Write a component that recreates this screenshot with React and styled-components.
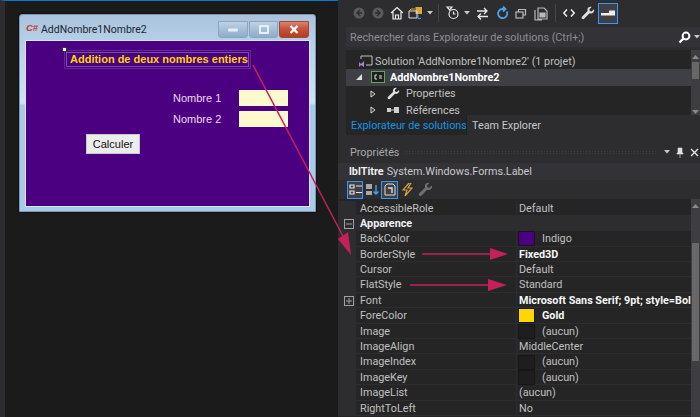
import React from "react"
import styled, { createGlobalStyle } from "styled-components"

const Global = createGlobalStyle`
	html, body {
		margin: 0;
		padding: 0;
		background: #1b1b1b;
	}
	#root {
		width: 700px;
		height: 417px;
	}
`

const Screen = styled.div`
	position: relative;
	display: grid;
	grid-template-columns: 338px 362px;
	width: 700px;
	height: 417px;
	overflow: hidden;
	font-family: Roboto, "Open Sans", sans-serif;
	font-size: 10.8px;
	color: #c8c8c8;
`

/* designer side */
const Designer = styled.div`
	box-sizing: border-box;
	height: 417px;
	padding: 13px 0 0 14px;
	background: #1b1b1b;
	border-top: 1px solid #007acc;
	border-left: 5px solid #2d2d30;
`

const FormWindow = styled.div`
	box-sizing: border-box;
	width: 297px;
	height: 198px;
	padding: 0 5px 5px;
	border-radius: 3px 3px 0 0;
	border: 1px solid #7c98b5;
	box-shadow: 0 0 2px #000;
	background: linear-gradient(180deg, #a9c3dd 0, #b5cfe8 25px, #cfe3f5 45%, #a8c9e8 46%, #a9cbea 100%);
`

const Caption = styled.div`
	display: flex;
	align-items: flex-start;
	height: 25px;
	box-sizing: border-box;
`

const CsharpIcon = styled.span`
	width: 13px;
	margin: 8px 2px 0 1px;
	font: italic 700 9.5px/10px "Liberation Sans", sans-serif;
	color: #c0392b;
`

const CaptionTitle = styled.span`
	flex: 1;
	margin-top: 8px;
	font: 10.5px Roboto, sans-serif;
	color: #1c2530;
`

const CaptionButtons = styled.div`
	display: flex;
	gap: 1px;
	margin: 6px 1px 0 0;
`

const CaptionButton = styled.div`
	display: flex;
	align-items: center;
	justify-content: center;
	width: ${p => p.$w}px;
	height: 17px;
	box-sizing: border-box;
	border: 1px solid ${p => (p.$close ? "#a8452f" : "#8aa5c0")};
	border-radius: 0 0 3px 3px;
	background: ${p =>
		p.$close
			? "linear-gradient(180deg, #d68572 0, #c5543c 45%, #b23d22 100%)"
			: "linear-gradient(180deg, #bdd2e6 0, #a8c1da 45%, #8fabc8 100%)"};
`

const FormBody = styled.div`
	box-sizing: border-box;
	height: 167px;
	padding: 9px 15px 0 38px;
	background: #4b0082;
	border: 1px solid #d6e6f5;
`

const TitleFrame = styled.div`
	position: relative;
	box-sizing: border-box;
	width: 187px;
	height: 19px;
	padding: 1px;
	border: 1px solid #5d2a90;
`

const Handle = styled.span`
	position: absolute;
	left: -3px;
	top: -4px;
	width: 3px;
	height: 3px;
	background: #fff;
	border: 1px solid #333;
`

const TitleLabel = styled.div`
	box-sizing: border-box;
	height: 15px;
	padding-left: 3px;
	border: 1px solid #7a4aa8;
	font: 700 11px/13px "Liberation Sans", sans-serif;
	color: #ffd700;
	white-space: nowrap;
`

const FieldRow = styled.div`
	display: flex;
	align-items: center;
	height: 16px;
	margin-top: ${p => p.$top}px;
	padding-left: 109px;
`

const FieldLabel = styled.span`
	width: 66px;
	font: 11px "Liberation Sans", sans-serif;
	color: #f0d8f0;
`

const FieldInput = styled.div`
	width: 49px;
	height: 16px;
	background: #fffacd;
`

const CalcButton = styled.div`
	display: flex;
	align-items: center;
	justify-content: center;
	width: 54px;
	height: 20px;
	margin: 7px 0 0 22px;
	box-sizing: border-box;
	background: #ececec;
	border: 1px solid #c8c8c8;
	font: 11px "Liberation Sans", sans-serif;
	color: #111;
`

/* right side */
const Tools = styled.div`
	display: flex;
	flex-direction: column;
	height: 417px;
	background: #2d2d30;
`

const Toolbar = styled.div`
	display: flex;
	align-items: center;
	gap: ${p => p.$gap || 0}px;
	height: 26px;
	padding-left: ${p => p.$pad || 0}px;
	box-sizing: border-box;
`

const ToolSlot = styled.div`
	display: flex;
	align-items: center;
	justify-content: center;
	width: ${p => p.$w || 19}px;
	height: ${p => p.$h || 18}px;
	box-sizing: border-box;
	border: 1px solid ${p => (p.$on ? "#3399ff" : "transparent")};
	background: ${p => (p.$on ? "#3f3f46" : "transparent")};
`

const ToolSep = styled.div`
	width: 1px;
	height: 18px;
	margin: 0 4px;
	background: #46464a;
`

const SearchBar = styled.div`
	display: flex;
	align-items: center;
	justify-content: space-between;
	height: 20px;
	margin: 1px 0 3px 8px;
	padding: 0 0 0 4px;
	background: #333337;
	color: #8e8e92;
`

const SearchTools = styled.div`
	display: flex;
	align-items: center;
	gap: 3px;
	padding-right: 0;
`

const TreePanel = styled.div`
	display: flex;
	height: 65px;
	margin-left: 8px;
	background: #252526;
`

const TreeRows = styled.div`
	flex: 1;
	padding-top: 3px;
`

const TreeRow = styled.div`
	display: flex;
	align-items: center;
	height: 16.3px;
	padding-left: ${p => p.$indent}px;
	background: ${p => (p.$sel ? "#3f3f46" : "transparent")};
	color: ${p => (p.$sel ? "#fff" : "#c0c0c0")};
	font-weight: ${p => (p.$sel ? 700 : 400)};
	white-space: nowrap;
`

const TreeIcon = styled.span`
	display: flex;
	align-items: center;
	justify-content: center;
	width: ${p => p.$w}px;
	flex: none;
`

const VScroll = styled.div`
	display: flex;
	flex-direction: column;
	align-items: center;
	width: 9px;
	padding-top: 4px;
	background: #3e3e42;
`

const Thumb = styled.div`
	width: 7px;
	height: ${p => p.$h}px;
	margin-top: ${p => p.$m}px;
	background: #686868;
`

const ScrollFill = styled.div`
	flex: 1;
`

const TabStrip = styled.div`
	display: flex;
	height: 20px;
	margin-left: 8px;
`

const Tab = styled.div`
	display: flex;
	align-items: center;
	height: 100%;
	box-sizing: border-box;
	padding: 1px 5px 0;
	width: ${p => p.$w}px;
	flex: ${p => (p.$grow ? 1 : "none")};
	color: ${p => (p.$active ? "#0e97e8" : "#c8c8c8")};
	background: ${p => (p.$active ? "#252526" : "#2d2d30")};
	border-left: ${p => (p.$active ? "none" : "1px solid #1e1e1e")};
	white-space: nowrap;
`

const Gutter = styled.div`
	height: 6px;
	background: #2d2d30;
`

const PropsHeader = styled.div`
	display: flex;
	align-items: center;
	gap: 6px;
	height: 22px;
	padding-left: 12px;
	background: #2d2d30;
	color: #a8a8a8;
`

const Dots = styled.div`
	flex: 1;
	height: 5px;
	background-image: radial-gradient(#46464a 0.6px, transparent 0.7px);
	background-size: 3px 2.5px;
`

const PinBox = styled.div`
	display: flex;
	align-items: center;
	gap: 6px;
	padding-right: 1px;
`

const ObjectRow = styled.div`
	display: flex;
	align-items: center;
	height: 17px;
	padding-left: 11px;
	background: #333337;
	white-space: nowrap;
	b {
		margin-right: 3px;
		color: #eee;
	}
`

const PropsTools = styled(Toolbar)`
	height: 19px;
	padding-left: 9px;
	gap: 1px;
`

const PropsGrid = styled.div`
	display: flex;
	flex: 1;
	background: #252526;
	overflow: hidden;
`

const PropsRows = styled.div`
	flex: 1;
	padding-top: 1.5px;
`

const PropRowBox = styled.div`
	display: grid;
	grid-template-columns: 18px 160px 1fr;
	height: 15.4px;
	line-height: 15.4px;
	box-sizing: border-box;
	border-bottom: 1px solid #2d2d30;
	white-space: nowrap;
`

const GutterCell = styled.div`
	display: flex;
	align-items: center;
	justify-content: center;
	padding-left: 4px;
	background: #2d2d30;
`

const NameCell = styled.div`
	padding-left: 4px;
	color: ${p => (p.$head ? "#f0f0f0" : "#c0c0c0")};
	font-weight: ${p => (p.$head ? 700 : 400)};
	background: ${p => (p.$head ? "#2d2d30" : "transparent")};
`

const ValueCell = styled.div`
	display: flex;
	align-items: center;
	gap: 7px;
	padding-left: 2px;
	border-left: 1px solid #2d2d30;
	color: ${p => (p.$bold ? "#f5f5f5" : "#c0c0c0")};
	font-weight: ${p => (p.$bold ? 700 : 400)};
	background: ${p => (p.$head ? "#2d2d30" : "transparent")};
`

const Swatch = styled.span`
	flex: none;
	width: 17px;
	height: 15px;
	margin-left: -1px;
	box-sizing: border-box;
	border: 1px solid #161616;
	background: ${p => p.$c};
`

const ArrowLayer = styled.svg`
	position: absolute;
	left: 0;
	top: 0;
	pointer-events: none;
`

const Glyph = ({ w = 14, h = 14, children, stroke = "#e8e8e8", sw = 1.3, fill = "none" }) => (
	<svg width={w} height={h} viewBox={`0 0 ${w} ${h}`} fill={fill} stroke={stroke} strokeWidth={sw}>
		{children}
	</svg>
)

const Wrench = ({ c = "#e0e0e0", size = 14 }) => (
	<svg width={size} height={size} viewBox="0 0 14 14">
		<path d="M13 3.2 10.6 5.4 8.8 4.9 8.4 3.2 10.6 1C8.6.3 6.4 1.6 6.4 3.8c0 .5.1 1 .2 1.3L1.2 10.4c-.7.8-.7 1.6-.1 2.3.6.6 1.500.6 2.2-.1l5.3-5.3c2.7.8 5.2-1.6 4.4-4.1Z" fill={c} />
	</svg>
)

const Drop = () => (
	<svg width="6" height="4" viewBox="0 0 6 4">
		<path d="M0 0h6L3 3.5Z" fill="#c8c8c8" />
	</svg>
)

const Back = ({ flip }) => (
	<svg width="12" height="12" viewBox="0 0 12 12">
		<circle cx="6" cy="6" r="5.5" fill="#5a5a5e" />
		<path d={flip ? "M5 3 8 6 5 9M8 6H3" : "M7 3 4 6 7 9M4 6h5"} stroke="#2d2d30" strokeWidth="1.4" fill="none" />
	</svg>
)

const Search = () => (
	<svg width="13" height="13" viewBox="0 0 13 13">
		<circle cx="8" cy="5" r="3.4" fill="none" stroke="#fff" strokeWidth="2" />
		<path d="M5.600 7.400 1.500 11.500" stroke="#fff" strokeWidth="2.2" />
	</svg>
)

const Expander = ({ open }) => (
	<svg width="8" height="8" viewBox="0 0 8 8">
		{open ? <path d="M7 1v6H1Z" fill="#e0e0e0" /> : <path d="M2 1l4 3-4 3Z" fill="none" stroke="#e0e0e0" />}
	</svg>
)

const PlusBox = ({ minus }) => (
	<svg width="10" height="10" viewBox="0 0 10 10">
		<rect x=".5" y=".5" width="9" height="9" fill="none" stroke="#a0a0a0" />
		<path d={minus ? "M2 5h6" : "M2 5h6M5 2v6"} stroke="#a0a0a0" />
	</svg>
)

const ScrollArrow = ({ down }) => (
	<svg width="9" height="6" viewBox="0 0 9 6">
		<path d={down ? "M1 1h7L4.500 5Z" : "M1 5h7L4.500 1Z"} fill="#8a8a8a" />
	</svg>
)

const props = [
	{ name: "AccessibleRole", value: "Default" },
	{ name: "Apparence", head: true },
	{ name: "BackColor", value: "Indigo", swatch: "#4b0082" },
	{ name: "BorderStyle", value: "Fixed3D", bold: true },
	{ name: "Cursor", value: "Default" },
	{ name: "FlatStyle", value: "Standard" },
	{ name: "Font", value: "Microsoft Sans Serif; 9pt; style=Bol", bold: true, plus: true },
	{ name: "ForeColor", value: "Gold", swatch: "#ffd700", bold: true },
	{ name: "Image", value: "(aucun)", swatch: "#1e1e1e" },
	{ name: "ImageAlign", value: "MiddleCenter" },
	{ name: "ImageIndex", value: "(aucun)", swatch: "#1e1e1e" },
	{ name: "ImageKey", value: "(aucun)", swatch: "#1e1e1e" },
	{ name: "ImageList", value: "(aucun)" },
	{ name: "RightToLeft", value: "No" },
]

const PropRow = ({ row }) => (
	<PropRowBox>
		<GutterCell>
			{row.head && <PlusBox minus />}
			{row.plus && <PlusBox />}
		</GutterCell>
		<NameCell $head={row.head}>{row.name}</NameCell>
		<ValueCell $bold={row.bold} $head={row.head}>
			{row.swatch && <Swatch $c={row.swatch} />}
			{row.value}
		</ValueCell>
	</PropRowBox>
)

export default function App() {
	return (
		<Screen>
			<Global />
			<Designer>
				<FormWindow>
					<Caption>
						<CsharpIcon>C#</CsharpIcon>
						<CaptionTitle>AddNombre1Nombre2</CaptionTitle>
						<CaptionButtons>
							<CaptionButton $w={30}>
								<svg width="10" height="4"><rect width="10" height="3" y=".5" rx="1" fill="#e8eef5" /></svg>
							</CaptionButton>
							<CaptionButton $w={29}>
								<svg width="10" height="9"><rect x="1" y="1" width="8" height="7" fill="none" stroke="#e8eef5" strokeWidth="2" /></svg>
							</CaptionButton>
							<CaptionButton $w={30} $close>
								<svg width="10" height="9"><path d="M1.500 1 8.500 8M8.500 1 1.500 8" stroke="#fff" strokeWidth="2.4" /></svg>
							</CaptionButton>
						</CaptionButtons>
					</Caption>
					<FormBody>
						<TitleFrame>
							<Handle />
							<TitleLabel>Addition de deux nombres entiers</TitleLabel>
						</TitleFrame>
						<FieldRow $top={21}>
							<FieldLabel>Nombre 1</FieldLabel>
							<FieldInput />
						</FieldRow>
						<FieldRow $top={5}>
							<FieldLabel>Nombre 2</FieldLabel>
							<FieldInput />
						</FieldRow>
						<CalcButton>Calculer</CalcButton>
					</FormBody>
				</FormWindow>
			</Designer>

			<Tools>
				<Toolbar $pad={11}>
					<ToolSlot><Back /></ToolSlot>
					<ToolSlot><Back flip /></ToolSlot>
					<ToolSlot>
						<Glyph w={14} h={14} sw={1.2} stroke="#f0f0f0">
							<path d="M1 7 7 1.500 13 7M3 6v7h8V6M5.500 13V9h3v4" />
						</Glyph>
					</ToolSlot>
					<ToolSlot>
						<svg width="15" height="14" viewBox="0 0 15 14">
							<rect x="7.500" y="1" width="6.500" height="7" fill="#d9a441" />
							<path d="M1 5h8v7H1Z" fill="none" stroke="#e0e0e0" />
							<path d="M1 5 3 3h4" fill="none" stroke="#d9a441" />
							<path d="M10 9v3.500h3" fill="none" stroke="#4aa3e8" />
						</svg>
					</ToolSlot>
					<ToolSlot $w={9}><Drop /></ToolSlot>
					<ToolSep />
					<ToolSlot>
						<Glyph w={14} h={14} sw={1.2}>
							<circle cx="7.500" cy="8" r="4.500" />
							<path d="M7.500 5.500V8h2M1 1h5L3.500 4Z" />
						</Glyph>
					</ToolSlot>
					<ToolSlot $w={9}><Drop /></ToolSlot>
					<ToolSlot $w={22}>
						<Glyph w={13} h={13} sw={1.3}>
							<path d="M1 4h10M8 1l3 3-3 3M12 9.500H2M5 6.500l-3 3 3 3" />
						</Glyph>
					</ToolSlot>
					<ToolSlot>
						<Glyph w={13} h={14} stroke="#4aa3e8" sw={1.8}>
							<path d="M10.800 5.500A4.600 4.600 0 1 1 6 3H9" />
							<path d="M7 .5 9.500 3 7 5.500" />
						</Glyph>
					</ToolSlot>
					<ToolSlot>
						<Glyph w={13} h={13} stroke="#b8b8b8" sw={1.2}>
							<rect x="1" y="5" width="7" height="6" />
							<path d="M3.500 5V2.500h7V8H8" />
						</Glyph>
					</ToolSlot>
					<ToolSlot $w={20}>
						<Glyph w={14} h={15} stroke="#b8b8b8" sw={1.2}>
							<path d="M4 2h6l3 3v8H4ZM1 4v10h7" />
							<path d="M6 7h5v4H6Z" fill="#b8b8b8" />
						</Glyph>
					</ToolSlot>
					<ToolSep />
					<ToolSlot $w={18}>
						<Glyph w={12} h={10} sw={1.4} stroke="#f0f0f0">
							<path d="M4 1.500.8 5 4 8.500M8 1.500 11.200 5 8 8.500" />
						</Glyph>
					</ToolSlot>
					<ToolSlot $w={20}><Wrench /></ToolSlot>
					<ToolSlot $w={20} $h={21} $on>
						<svg width="14" height="6" viewBox="0 0 14 6">
							<path d="M0 3h14v2.500H0Z" fill="#f0f0f0" />
							<path d="M8 .5h6V3H8Z" fill="#f0f0f0" />
						</svg>
					</ToolSlot>
				</Toolbar>

				<SearchBar>
					Rechercher dans Explorateur de solutions (Ctrl+;)
					<SearchTools>
						<Search />
						<Drop />
					</SearchTools>
				</SearchBar>

				<TreePanel>
					<TreeRows>
						<TreeRow $indent={10}>
							<TreeIcon $w={19}>
								<svg width="15" height="13" viewBox="0 0 15 13">
									<path d="M3 4V1h11v9H8" fill="none" stroke="#c0c0c0" />
									<path d="M1 7l2 2 3-3v6L3 10l-2 2Z" fill="#b180d7" />
								</svg>
							</TreeIcon>
							Solution 'AddNombre1Nombre2' (1 projet)
						</TreeRow>
						<TreeRow $indent={5} $sel>
							<TreeIcon $w={15}><Expander open /></TreeIcon>
							<TreeIcon $w={24}>
								<svg width="14" height="12" viewBox="0 0 14 12">
									<rect x=".5" y=".5" width="13" height="11" fill="#1e1e1e" stroke="#5da85d" />
									<path d="M6 4H4v4h2M8 5h3M8 7h3" stroke="#e0e0e0" fill="none" />
								</svg>
							</TreeIcon>
							AddNombre1Nombre2
						</TreeRow>
						<TreeRow $indent={19}>
							<TreeIcon $w={16}><Expander /></TreeIcon>
							<TreeIcon $w={25}><Wrench size={13} /></TreeIcon>
							Properties
						</TreeRow>
						<TreeRow $indent={19}>
							<TreeIcon $w={16}><Expander /></TreeIcon>
							<TreeIcon $w={25}>
								<svg width="13" height="7" viewBox="0 0 13 7">
									<rect x="0" y="1" width="4" height="4" fill="#d0d0d0" />
									<path d="M4 3h4" stroke="#d0d0d0" />
									<rect x="7" y="0" width="5" height="6" fill="#d0d0d0" />
								</svg>
							</TreeIcon>
							Références
						</TreeRow>
					</TreeRows>
					<VScroll>
						<ScrollArrow />
						<Thumb $h={17} $m={2} />
						<ScrollFill />
						<ScrollArrow down />
					</VScroll>
				</TreePanel>

				<TabStrip>
					<Tab $active $w={120}>Explorateur de solutions</Tab>
					<Tab $grow>Team Explorer</Tab>
				</TabStrip>

				<Gutter />

				<PropsHeader>
					Propriétés
					<Dots />
					<PinBox>
						<Drop />
						<svg width="8" height="11" viewBox="0 0 8 11">
							<path d="M2 1h4v5h1v1H1V6h1ZM4 7v4" fill="#e0e0e0" stroke="#e0e0e0" strokeWidth=".6" />
						</svg>
						<svg width="9" height="9" viewBox="0 0 9 9">
							<path d="M1 1l7 7M8 1 1 8" stroke="#e8e8e8" strokeWidth="1.3" />
						</svg>
					</PinBox>
				</PropsHeader>

				<ObjectRow>
					<span><b>lblTitre</b>System.Windows.Forms.Label</span>
				</ObjectRow>

				<PropsTools>
					<ToolSlot $w={16} $on>
						<svg width="13" height="12" viewBox="0 0 13 12">
							<path d="M1 1h4v3H1ZM7 2h6M1 7h4v3H1ZM7 8.500h6" fill="none" stroke="#e8e8e8" strokeWidth="1.2" />
						</svg>
					</ToolSlot>
					<ToolSlot $w={16}>
						<svg width="14" height="13" viewBox="0 0 14 13">
							<path d="M1 1h6v5H1ZM1 8h6v4H1Z" fill="#a8a8a8" />
							<path d="M11 2v9M8.500 8.500 11 11l2.500-2.500" fill="none" stroke="#4aa3e8" strokeWidth="1.4" />
						</svg>
					</ToolSlot>
					<ToolSlot $w={17} $on>
						<svg width="12" height="13" viewBox="0 0 12 13">
							<path d="M3 1h6l2 2v9H1V3Z" fill="none" stroke="#e0e0e0" />
							<path d="M4 5h4v5" fill="none" stroke="#e0e0e0" strokeWidth="1.4" />
						</svg>
					</ToolSlot>
					<ToolSlot $w={16}>
						<svg width="11" height="13" viewBox="0 0 11 13">
							<path d="M7 0 1 7h4l-2 6 7-8H6l3-5Z" fill="none" stroke="#d9a441" strokeWidth="1.2" />
						</svg>
					</ToolSlot>
					<ToolSlot $w={18}><Wrench c="#6e6e72" size={15} /></ToolSlot>
				</PropsTools>

				<PropsGrid>
					<PropsRows>
						{props.map(row => <PropRow key={row.name} row={row} />)}
					</PropsRows>
					<VScroll>
						<ScrollArrow />
						<Thumb $h={118} $m={34} />
					</VScroll>
				</PropsGrid>
			</Tools>

			{/* annotation arrows drawn over the screenshot */}
			<ArrowLayer width="700" height="417" viewBox="0 0 700 417">
				<g stroke="#c4215a" strokeWidth="1.5" fill="#c4215a">
					<path d="M253 65 345 240" fill="none" />
					<path d="M351 255 338 239 348 232Z" stroke="none" />
					<path d="M422 254H492" fill="none" />
					<path d="M508 254 490 248V260Z" stroke="none" />
					<path d="M410 285H490" fill="none" />
					<path d="M507 285 488 279V291Z" stroke="none" />
				</g>
			</ArrowLayer>
		</Screen>
	)
}
